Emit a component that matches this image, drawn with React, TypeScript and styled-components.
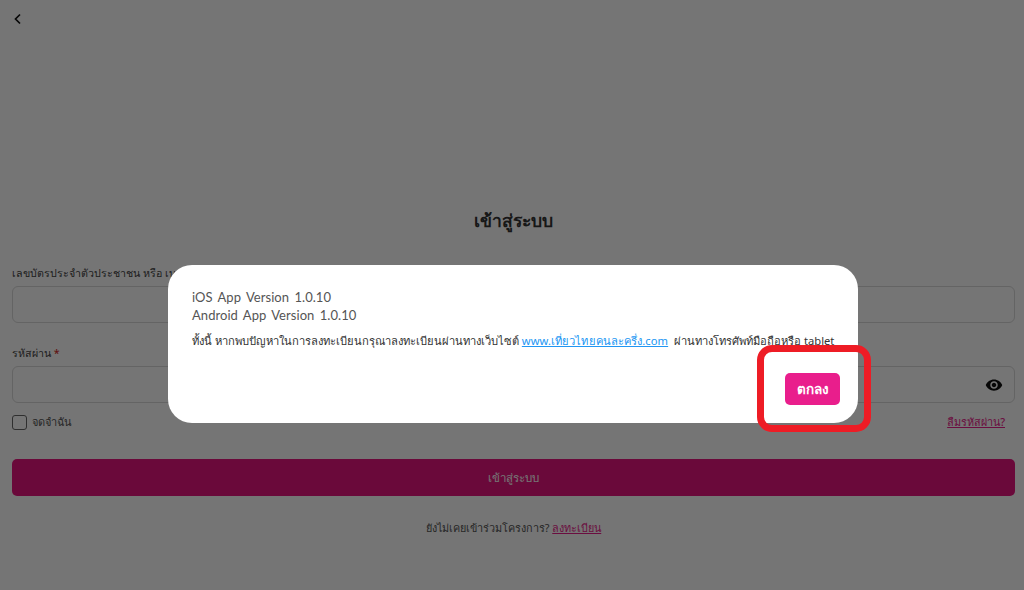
import styled, { createGlobalStyle } from "styled-components";

const GlobalStyle = createGlobalStyle`
  html, body {
    margin: 0;
    padding: 0;
    background: #fff;
    font-family: "Noto Sans", "Open Sans", "Liberation Sans", sans-serif;
  }
  * { box-sizing: border-box; }
`;

// Page behind the dialog
const Page = styled.div`
  width: 1024px;
  height: 590px;
  overflow: hidden;
  padding: 0 9px 0 12px;
  display: flex;
  flex-direction: column;
`;
const BackButton = styled.div`
  height: 38px;
  display: flex;
  align-items: center;
  color: #111;
`;
const Title = styled.h1`
  margin: 166px 0 0;
  height: 32px;
  line-height: 32px;
  font-size: 17.5px;
  font-weight: 700;
  text-align: center;
  color: #333;
`;
const Field = styled.div<{ $top: number }>`
  margin-top: ${(p) => p.$top}px;
`;
const Label = styled.label`
  display: block;
  height: 18px;
  line-height: 18px;
  font-size: 10.7px;
  font-weight: 500;
  color: #444;
`;
const Required = styled.span`
  color: #d32f2f;
`;
const InputBox = styled.div`
  height: 37px;
  margin-top: 4px;
  border: 1px solid #d9d9d9;
  border-radius: 6px;
  display: flex;
  align-items: center;
  justify-content: flex-end;
  padding-right: 11px;
  color: #111;
`;
const OptionsRow = styled.div`
  margin-top: 10px;
  display: flex;
  align-items: center;
  justify-content: space-between;
  padding-right: 10px;
`;
const Remember = styled.div`
  display: flex;
  align-items: center;
  gap: 5px;
  font-size: 11px;
  color: #555;
`;
const CheckBox = styled.span`
  width: 15px;
  height: 15px;
  border: 1.5px solid #666;
  border-radius: 3px;
`;
const PinkLink = styled.a`
  font-size: 10.8px;
  font-weight: 500;
  color: #e91e8c;
  text-decoration: underline;
`;
const SubmitButton = styled.button`
  margin-top: 28px;
  width: 100%;
  height: 37px;
  border: 0;
  border-radius: 5px;
  background: #e8157f;
  color: #fff;
  font-family: inherit;
  font-size: 11.5px;
  font-weight: 500;
`;
const RegisterRow = styled.p`
  margin: 24px 0 0;
  text-align: center;
  font-size: 10.8px;
  color: #555;
`;

// Dialog
const Overlay = styled.div`
  position: fixed;
  inset: 0;
  background: rgba(0, 0, 0, 0.54);
  padding: 265px 0 0 168px;
`;
const Dialog = styled.div`
  position: relative;
  width: 690px;
  height: 158px;
  padding: 23px 24px 0;
  background: #fff;
  border-radius: 24px;
`;
const VersionLine = styled.div`
  height: 18px;
  line-height: 18px;
  font-family: "Lato", "Open Sans", sans-serif;
  font-size: 13px;
  letter-spacing: 0.05px;
  word-spacing: 2px;
  color: #555;
`;
const Message = styled.p`
  margin: 7px 0 0;
  height: 20px;
  line-height: 20px;
  font-size: 11.2px;
  white-space: nowrap;
  color: #333;
`;
const SiteLink = styled.a`
  letter-spacing: 0.08px;
  margin-right: 3px;
  color: #2196f3;
  text-decoration: underline;
`;
const DialogActions = styled.div`
  margin-top: 22px;
  display: flex;
  justify-content: flex-end;
`;
const ConfirmButton = styled.button`
  width: 55px;
  height: 32px;
  margin-right: -6px;
  border: 0;
  border-radius: 5px;
  background: #e91e8c;
  color: #fff;
  font-family: inherit;
  font-size: 13.5px;
  font-weight: 600;
`;
// Red marker drawn on top of the screenshot
const Highlight = styled.div`
  position: absolute;
  right: -13px;
  bottom: -9px;
  width: 114px;
  height: 87px;
  border: 7px solid #ee1c25;
  border-radius: 15px;
  pointer-events: none;
`;

const App = () => {
  return (
    <>
      <GlobalStyle />
      <Page>
        <BackButton>
          <svg width="12" height="12" viewBox="0 0 12 12" fill="none">
            <path d="M8 1.5 3.5 6 8 10.5" stroke="currentColor" strokeWidth="1.7" />
          </svg>
        </BackButton>
        <Title>เข้าสู่ระบบ</Title>
        <Field $top={28}>
          <Label>เลขบัตรประจำตัวประชาชน หรือ เบอร์โทรศัพท์ *</Label>
          <InputBox />
        </Field>
        <Field $top={21}>
          <Label>
            รหัสผ่าน <Required>*</Required>
          </Label>
          <InputBox>
            <svg width="18" height="18" viewBox="0 0 24 24" fill="currentColor">
              <path d="M12 4.5C7 4.5 2.73 7.61 1 12c1.73 4.39 6 7.5 11 7.5s9.27-3.11 11-7.5c-1.73-4.39-6-7.5-11-7.5zM12 17c-2.76 0-5-2.24-5-5s2.24-5 5-5 5 2.24 5 5-2.24 5-5 5zm0-8c-1.66 0-3 1.34-3 3s1.34 3 3 3 3-1.34 3-3-1.34-3-3-3z" />
            </svg>
          </InputBox>
        </Field>
        <OptionsRow>
          <Remember>
            <CheckBox />
            จดจำฉัน
          </Remember>
          <PinkLink>ลืมรหัสผ่าน?</PinkLink>
        </OptionsRow>
        <SubmitButton>เข้าสู่ระบบ</SubmitButton>
        <RegisterRow>
          ยังไม่เคยเข้าร่วมโครงการ? <PinkLink>ลงทะเบียน</PinkLink>
        </RegisterRow>
      </Page>
      <Overlay>
        <Dialog>
          <VersionLine>iOS App Version 1.0.10</VersionLine>
          <VersionLine>Android App Version 1.0.10</VersionLine>
          <Message>
            ทั้งนี้ หากพบปัญหาในการลงทะเบียนกรุณาลงทะเบียนผ่านทางเว็บไซต์{" "}
            <SiteLink>www.เที่ยวไทยคนละครึ่ง.com</SiteLink> ผ่านทางโทรศัพท์มือถือหรือ tablet
          </Message>
          <DialogActions>
            <ConfirmButton>ตกลง</ConfirmButton>
          </DialogActions>
          <Highlight />
        </Dialog>
      </Overlay>
    </>
  );
};

export default App;
